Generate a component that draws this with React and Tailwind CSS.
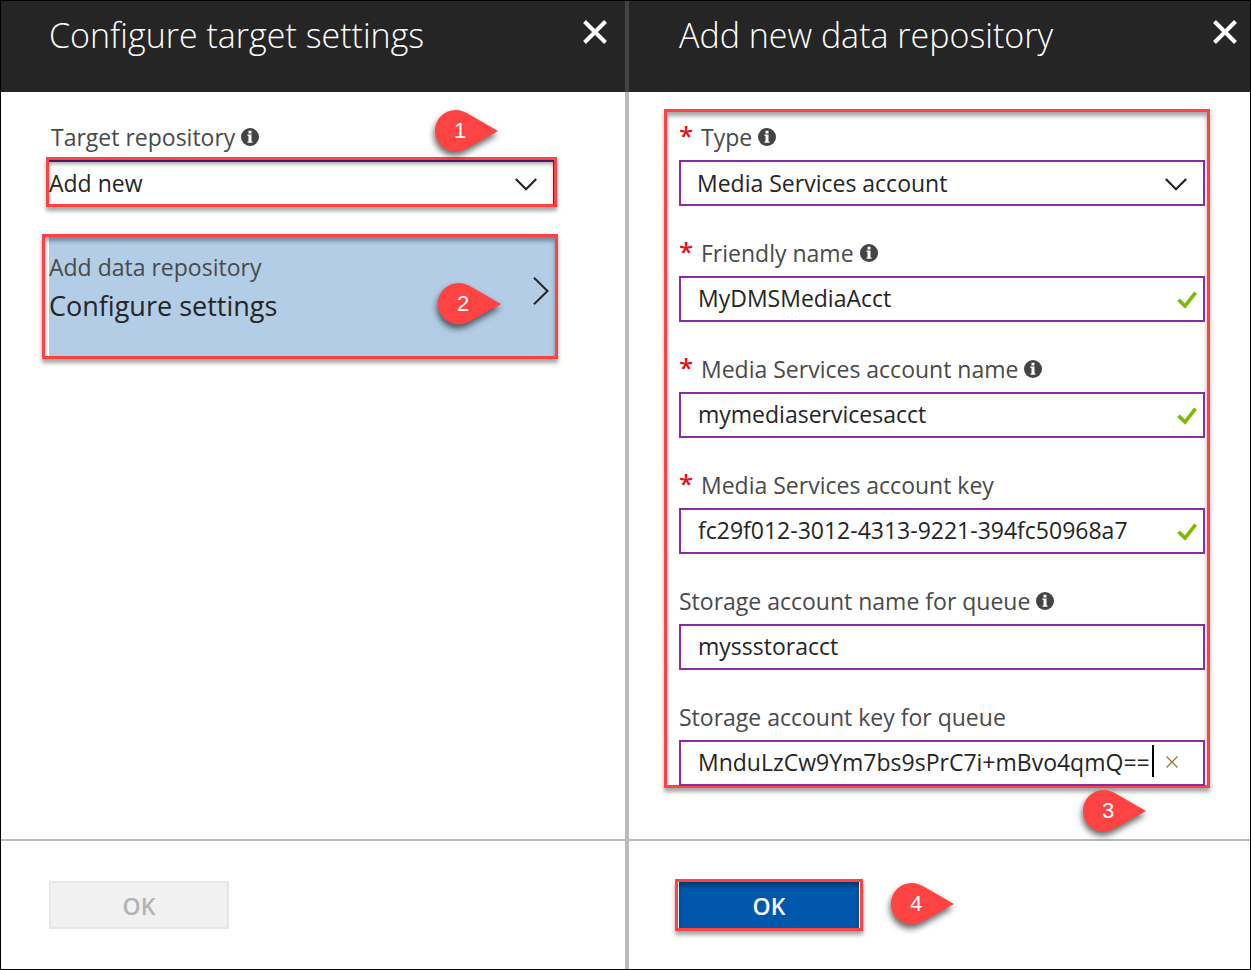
import React from "react";

function CloseIcon() {
  return (
    <svg viewBox="0 0 24 24" className="size-6" fill="none" stroke="currentColor" strokeWidth="4" aria-hidden="true">
      <path d="M1.5 1.5 22.5 22.5M22.5 1.5 1.5 22.5" />
    </svg>
  );
}

function InfoIcon() {
  return (
    <svg viewBox="0 0 18 18" className="size-[18px] shrink-0" aria-hidden="true">
      <circle cx="9" cy="9" r="9" fill="#444444" />
      <path d="M7.5 2.800h3v2.600h-3zM6.500 6.600h4v6.800h1v1.400h-5v-1.400h1V8h-1z" fill="#ffffff" />
    </svg>
  );
}

function CheckIcon() {
  return (
    <svg viewBox="0 0 20 18" className="pointer-events-none absolute top-[15px] right-2 h-[18px] w-5" fill="none" stroke="#7fba00" strokeWidth="3.6" aria-hidden="true">
      <path d="M1.5 8.8 8 15 18.6 1.6" />
    </svg>
  );
}

function ChevronDown() {
  return (
    <svg viewBox="0 0 22 13" className="pointer-events-none absolute top-[18px] right-[18px] h-[13px] w-[22px]" fill="none" stroke="#252525" strokeWidth="2.2" aria-hidden="true">
      <path d="M.8 1 11 11.2 21.2 1" />
    </svg>
  );
}

function Pin({ number, className }) {
  return (
    <span className={"h-[42px] w-[63px] " + className}>
      <svg viewBox="0 0 63 42" className="h-full w-full overflow-visible drop-shadow-[-1px_4px_3px_rgba(0,0,0,0.6)]" aria-hidden="true">
        <path d="M63 21 34 37.2C29.5 39.8 25.5 41.5 20.7 41.5A20.7 20.7 0 0 1 20.7 0C25.5 0 29.5 1.900 34 4.300Z" fill="#ff4343" />
      </svg>
      <span className="absolute inset-y-0 left-0 flex w-[50px] items-center justify-center font-['Liberation_Sans',sans-serif] text-[22px] leading-none text-white">
        {number}
      </span>
    </span>
  );
}

function Header({ title, className }) {
  return (
    <header className={"flex h-[91px] shrink-0 items-start justify-between bg-[#252525] text-white " + className}>
      <h1 className="pt-2.5 text-[34px] leading-[48px] font-light whitespace-nowrap">{title}</h1>
      <button type="button" aria-label="Close" className="mt-[19px]">
        <CloseIcon />
      </button>
    </header>
  );
}

const frameShadow =
  "border-[3px] border-[#ff4343] shadow-[0_4px_4px_rgba(0,0,0,0.35),inset_0_4px_4px_rgba(0,0,0,0.35)]";

function Field({ id, label, value, required, info, valid, options, clearable }) {
  return (
    <div>
      <div className="mb-[5px] flex h-9 items-center">
        {required && (
          <span className="h-9 w-[22px] text-[26px] leading-8 font-semibold text-[#e81123]" aria-hidden="true">
            *
          </span>
        )}
        <label htmlFor={id} className="mr-1.5 text-[23px] leading-9 whitespace-nowrap text-[#4a4a4a]">
          {label}
        </label>
        {info && <InfoIcon />}
      </div>
      <div className="relative">
        {options ? (
          <>
            <select id={id} defaultValue={value} className="block h-[46px] w-full appearance-none border-2 border-[#8a2da5] bg-white pl-4 text-[23px] text-[#252525] outline-none">
              {options.map((o) => (
                <option key={o}>{o}</option>
              ))}
            </select>
            <ChevronDown />
          </>
        ) : (
          <input id={id} type="text" defaultValue={value} className="block h-[46px] w-full border-2 border-[#8a2da5] bg-white pr-12 pb-0.5 pl-[17px] text-[23px] text-[#252525] outline-none" />
        )}
        {valid && <CheckIcon />}
        {clearable && (
          <>
            <span className="absolute top-[5px] right-[51px] h-8 w-0.5 bg-black" />
            <button type="button" aria-label="Clear" className="absolute top-4 right-[27px]">
              <svg viewBox="0 0 12 12" className="size-3" fill="none" stroke="#a07030" strokeWidth="1.3" aria-hidden="true">
                <path d="M.5.5 11.500 11.500M11.500.5.5 11.500" />
              </svg>
            </button>
          </>
        )}
      </div>
    </div>
  );
}

const fields = [
  { id: "type", label: "Type", value: "Media Services account", required: true, info: true, options: ["Media Services account"] },
  { id: "friendly", label: "Friendly name", value: "MyDMSMediaAcct", required: true, info: true, valid: true },
  { id: "account", label: "Media Services account name", value: "mymediaservicesacct", required: true, info: true, valid: true },
  { id: "key", label: "Media Services account key", value: "fc29f012-3012-4313-9221-394fc50968a7", required: true, valid: true },
  { id: "storage", label: "Storage account name for queue", value: "myssstoracct", info: true },
  { id: "storage-key", label: "Storage account key for queue", value: "MnduLzCw9Ym7bs9sPrC7i+mBvo4qmQ==", clearable: true },
];

export default function App() {
  return (
    <div className="grid min-h-screen grid-cols-[624fr_625fr] border border-black bg-white font-['Open_Sans','Noto_Sans',sans-serif]">
      <section className="flex flex-col">
        <Header title="Configure target settings" className="pr-[18px] pl-12" />
        <div className="flex grow flex-col pt-[27px] pr-[70px] pl-12">
          <div className="mb-[5px] flex h-9 items-center">
            <label htmlFor="target" className="mr-1.5 pl-0.5 text-[23px] leading-9 text-[#4a4a4a]">
              Target repository
            </label>
            <InfoIcon />
          </div>
          <div className="relative">
            <select id="target" defaultValue="Add new" className="block h-11 w-full appearance-none border-t-2 border-r-2 border-[#6f2590] bg-white text-[23px] text-[#252525] outline-none">
              <option>Add new</option>
            </select>
            <ChevronDown />
            <div className={"pointer-events-none absolute -inset-y-[3px] -right-0.5 -left-[3px] " + frameShadow} />
            <Pin number="1" className="absolute -top-[50px] right-[57px]" />
          </div>
          <div className="relative mt-[33px]">
            <button type="button" className="flex h-[119px] w-full items-start justify-between bg-[#b3cde6] pt-3 pr-1.5 text-left">
              <span className="flex flex-col">
                <span className="text-[23px] leading-9 text-[#4a4a4a]">Add data repository</span>
                <span className="text-[27px] leading-[42px] text-[#252525]">Configure settings</span>
              </span>
              <svg viewBox="0 0 16 28" className="mt-7 h-7 w-4" fill="none" stroke="#252525" strokeWidth="2" aria-hidden="true">
                <path d="M1 .8 14.500 14 1 27.200" />
              </svg>
            </button>
            <div className={"pointer-events-none absolute -inset-y-[3px] -right-[3px] -left-[7px] " + frameShadow} />
            <Pin number="2" className="absolute top-[46px] right-[54px]" />
          </div>
        </div>
        <footer className="h-[130px] shrink-0 border-t-2 border-[#bababa] pt-10 pl-12">
          <button type="button" disabled className="h-12 w-[180px] border-2 border-[#e6e6e6] bg-[#f1f1f1] pt-0.5 text-[23px] leading-8 font-semibold text-[#b3b3b3]">
            OK
          </button>
        </footer>
      </section>

      <section className="flex flex-col">
        <Header title="Add new data repository" className="border-l-4 border-[#444444] pr-[13px] pl-[50px]" />
        <div className="grow border-l-4 border-[#bababa] pt-[17px] pr-10 pb-[51px] pl-[35px]">
          <div className={"relative flex h-[679px] flex-col gap-[29px] pt-[7px] pr-0.5 pl-3 " + frameShadow}>
            {fields.map((f) => (
              <Field key={f.id} {...f} />
            ))}
            <Pin number="3" className="absolute top-[678px] right-[61px]" />
          </div>
        </div>
        <footer className="flex h-[130px] shrink-0 items-start border-l-4 border-[#bababa]">
          <div className="flex h-full grow items-start border-t-2 border-[#bababa] pt-[38px] pl-[46px]">
            <div className="h-[52px] w-[188px] border-[3px] border-[#ff4343] px-px shadow-[0_4px_4px_rgba(0,0,0,0.35)]">
              <button type="button" className="h-full w-full bg-[#0058ad] pt-0.5 text-[23px] leading-8 font-semibold text-white shadow-[inset_0_4px_4px_rgba(0,0,0,0.35)]">
                OK
              </button>
            </div>
            <Pin number="4" className="relative mt-1 ml-7" />
          </div>
        </footer>
      </section>
    </div>
  );
}
